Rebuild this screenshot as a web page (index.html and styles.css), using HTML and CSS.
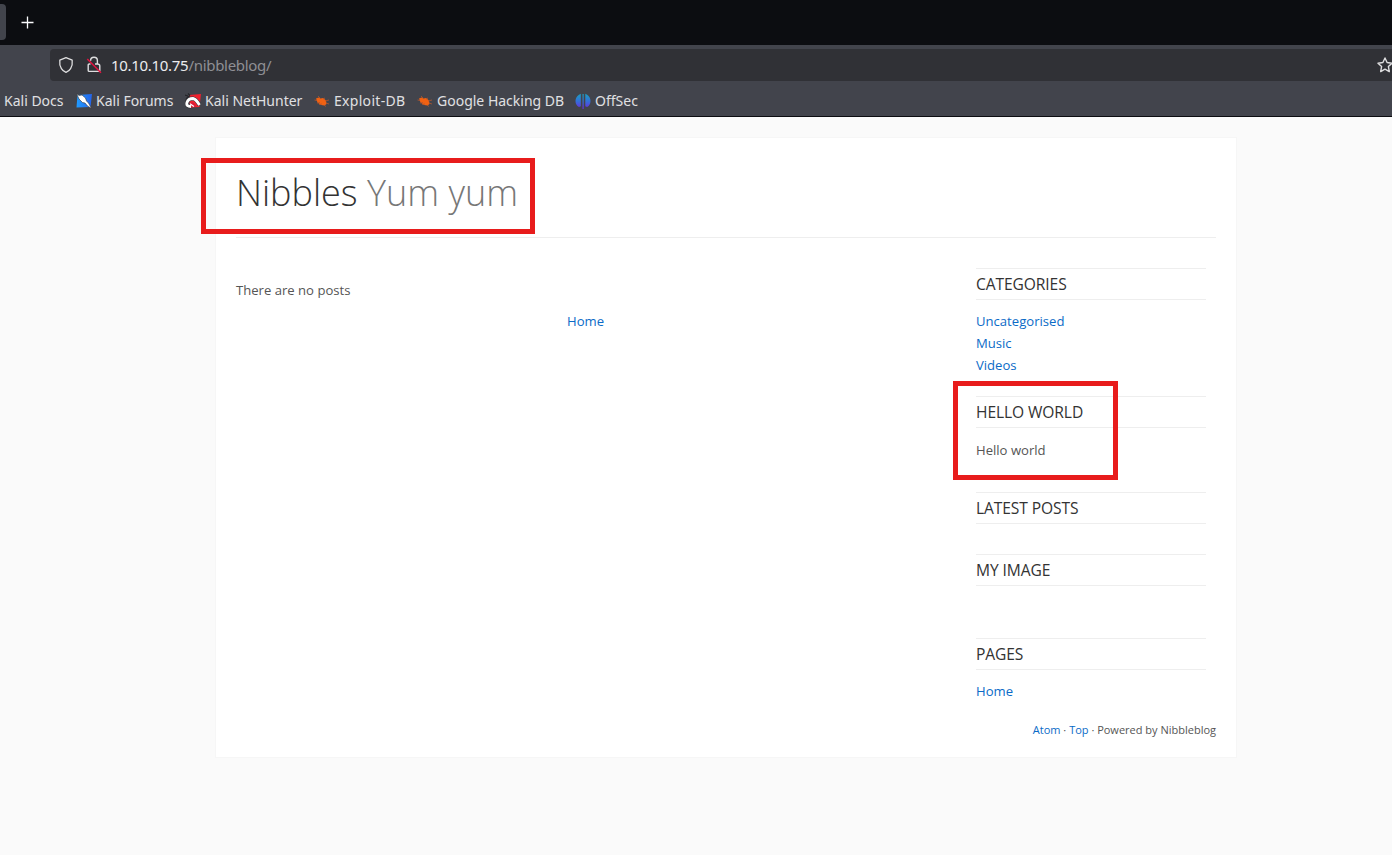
FILE: index.html
```html
<!DOCTYPE html>
<html lang="en">
<head>
<meta charset="utf-8">
<title>Nibbles Yum yum</title>
<link rel="stylesheet" href="styles.css">
</head>
<body>
<div class="chrome">
  <div class="tabs">
    <div class="tab"></div>
    <svg class="plus" width="14" height="14" viewBox="0 0 14 14"><path d="M6.500 .5v12M.5 6.500h12" stroke="#fbfbfe" stroke-width="1.3" fill="none"/></svg>
  </div>
  <div class="toolbar">
    <div class="urlbar">
      <svg class="shield" width="16" height="18" viewBox="0 0 16 18" fill="none" stroke="#dededf" stroke-width="1.3" stroke-linejoin="round"><path d="M8 1.6 14.2 4.1Q14.8 9 12.6 12.6Q11 15.2 8 16.4Q5 15.2 3.4 12.6Q1.2 9 1.8 4.1Z"/></svg>
      <svg class="lock" width="16" height="18" viewBox="0 0 16 18" fill="none" stroke="#dededf" stroke-width="1.4"><path d="M4.6 4.700a3.4 3.4 0 0 1 6.8 0V8M4.500 8H3.2Q2.2 8 2.2 9v5.4q0 1 1 1h9.6q1 0 1-1V10q0-2-2.4-2H9"/><path d="M1.3 3 15 16.700" stroke="#e3123f" stroke-width="1.5"/></svg>
      <span class="url"><span class="host">10.10.10.75</span>/nibbleblog/</span>
      <svg class="star" width="18" height="18" viewBox="0 0 18 18" fill="none" stroke="#dededf" stroke-width="1.4" stroke-linejoin="round"><path d="m9 2 2.1 4.5 4.9.7-3.6 3.4.9 5L9 13.2l-4.3 2.4.9-5L2 7.2l4.900-.7Z"/></svg>
    </div>
  </div>
  <div class="bookmarks">
    <div class="bm docs">Kali Docs</div>
    <div class="bm forums">
      <svg width="16" height="16" viewBox="0 0 16 16"><defs><linearGradient id="f" x1="0" x2="1"><stop stop-color="#209cff"/><stop offset="1" stop-color="#2463eb"/></linearGradient></defs><path d="M1.5 2 16 1l-1.500 13L.5 14.500Z" fill="url(#f)"/><path d="M.5.5 3 2.500 6 2 9.500 5 10.500 8 12.500 10 15.500 15.500 11.500 13 9 10 6.500 9.500 3 6Z" fill="#fff" stroke="#303034" stroke-width=".6"/></svg>Kali Forums</div>
    <div class="bm hunter">
      <svg width="16" height="16" viewBox="0 0 16 16"><path d="M4 2 16 1l-1.500 13L5 14.500Z" fill="#f0222f"/><path d="M0 2l3 1M3 .5l2 2M1 8Q1 4 5 3" fill="none" stroke="#25262a" stroke-width="1.2"/><path d="M6 13.500Q.8 13.500 2 9.500T8 5.500Q11 6 14.500 12" fill="none" stroke="#303034" stroke-width="3.900"/><path d="M6 13.500Q.8 13.500 2 9.500T8 5.500Q11 6 14.500 12" fill="none" stroke="#fff" stroke-width="2.800"/><path d="M5 10.500 7.500 9l4 4.500H7" fill="#d71939"/><path d="M5 10.800 9 13.500" stroke="#fff" stroke-width="1.200"/></svg>Kali NetHunter</div>
    <div class="bm exploit"><svg width="16" height="16" viewBox="0 0 16 16"><g id="bug"><path d="M2 5.500 4.500 4.500 6.500 5.500 9 5l3 2.500.5 3.500-2 1.500L7 12 3.500 9.500Z" fill="#f06112"/><path d="M.5 7 3 7.500M3 10l3-.5M5 11.500 8 11M4 3l2 2M9 6l2-1M11 8l4-1M12 10l3 1M10 12l2 1.500" stroke="#b3562e" stroke-width=".8"/></g></svg>Exploit-DB</div>
    <div class="bm hacking"><svg width="16" height="16" viewBox="0 0 16 16"><use href="#bug"/></svg>Google Hacking DB</div>
    <div class="bm offsec">
      <svg width="16" height="16" viewBox="0 0 16 16"><defs><linearGradient id="o" x1="0" y1="0" x2="0" y2="16" gradientUnits="userSpaceOnUse"><stop stop-color="#18a6bd"/><stop offset=".5" stop-color="#3271d8"/><stop offset="1" stop-color="#6b29df"/></linearGradient></defs><path d="M5.800.8V13.300L4 14Q.5 12 .5 8T4 1.700ZM7.500 1h1.200v15H7.500ZM10.300.8 12.100 1.700Q15.500 4 15.500 8t-3.400 6L10.300 13.300Z" fill="url(#o)"/></svg>OffSec</div>
  </div>
</div>
<div class="page">
  <main class="card">
    <header class="head"><h1>Nibbles <span>Yum yum</span></h1><div class="mark mark-title"></div></header>
    <div class="columns">
      <section class="posts"><p>There are no posts</p><nav><a>Home</a></nav></section>
      <aside class="side">
        <section class="categories"><h2>CATEGORIES</h2><a>Uncategorised</a><a>Music</a><a>Videos</a></section>
        <section class="hello"><h2>HELLO WORLD</h2><p>Hello world</p><div class="mark mark-hello"></div></section>
        <section class="latest"><h2>LATEST POSTS</h2></section>
        <section class="image"><h2>MY IMAGE</h2></section>
        <section class="pages"><h2>PAGES</h2><a>Home</a></section>
      </aside>
    </div>
    <footer><a>Atom</a> · <a>Top</a> · Powered by Nibbleblog</footer>
  </main>
</div>
</body>
</html>
```
FILE: styles.css
```css
* { box-sizing: border-box; }
body { margin: 0; height: 855px; overflow: hidden; background: #fafafa; font: 13.1px/22px "Open Sans", sans-serif; color: #555; }
h1, h2, p { margin: 0; font-weight: 400; }
svg { display: block; flex: none; }
a { color: #0b6bc7; }

.chrome { height: 117px; background: #42444c; border-bottom: 1px solid #0c0d11; font-family: "Noto Sans", sans-serif; }
.tabs { height: 45px; background: #0c0d11; display: flex; align-items: center; gap: 15px; }
.tab { width: 6px; height: 36px; margin-bottom: 1px; background: #42444c; border-radius: 0 4px 4px 0; }
.toolbar { height: 40px; padding: 4px 0 4px 50px; overflow: hidden; }
.urlbar { width: 1350px; height: 32px; background: #303136; border-radius: 4px; display: flex; align-items: center; padding-left: 8px; }
.lock { margin-left: 12px; }
.url { margin-left: 9px; font-size: 15px; letter-spacing: -0.3px; color: #8f8f94; white-space: nowrap; }
.host { color: #ececee; }
.star { margin-left: auto; margin-right: 6px; }
.bookmarks { height: 31px; display: flex; align-items: center; padding-left: 4px; font-size: 14px; line-height: 20px; color: #e0e0e3; white-space: nowrap; }
.bm { display: flex; align-items: center; gap: 4px; flex: none; }
.docs { width: 72px; }
.forums { width: 109px; }
.hunter { width: 129px; }
.exploit { width: 103px; letter-spacing: 0.3px; }
.hacking { width: 158px; }

.page { padding: 21px 0 0 216px; }
.card { width: 1020px; height: 619px; padding: 0 20px; background: #fff; box-shadow: 0 0 0 1px #f6f6f6; }
.head { position: relative; height: 100px; padding-top: 29px; border-bottom: 1px solid #eee; }
h1 { font-size: 36px; line-height: 52px; font-weight: 300; color: #333; white-space: nowrap; }
h1 span { color: #777; }
.mark { position: absolute; border: 5px solid #e81c1c; }
.mark-title { left: -35px; top: 20px; width: 334px; height: 76px; }
.columns { display: flex; justify-content: space-between; padding: 30px 10px 0 0; }
.posts { width: 699px; padding-top: 11px; }
.posts nav { margin-top: 9px; text-align: center; }
.side { width: 230px; }
.side section { position: relative; }
.side a { display: block; }
h2 { height: 32px; border: solid #eee; border-width: 1px 0; font-size: 15.6px; line-height: 30px; letter-spacing: -0.1px; color: #333; margin-bottom: 10px; }
.categories { height: 128px; }
.hello { height: 96px; }
.hello p { padding-top: 1px; }
.latest { height: 62px; }
.image { height: 84px; }
.pages { height: 81px; }
.mark-hello { left: -23px; top: -15px; width: 165px; height: 99px; }
footer { text-align: right; font-size: 11px; line-height: 22px; }
```
